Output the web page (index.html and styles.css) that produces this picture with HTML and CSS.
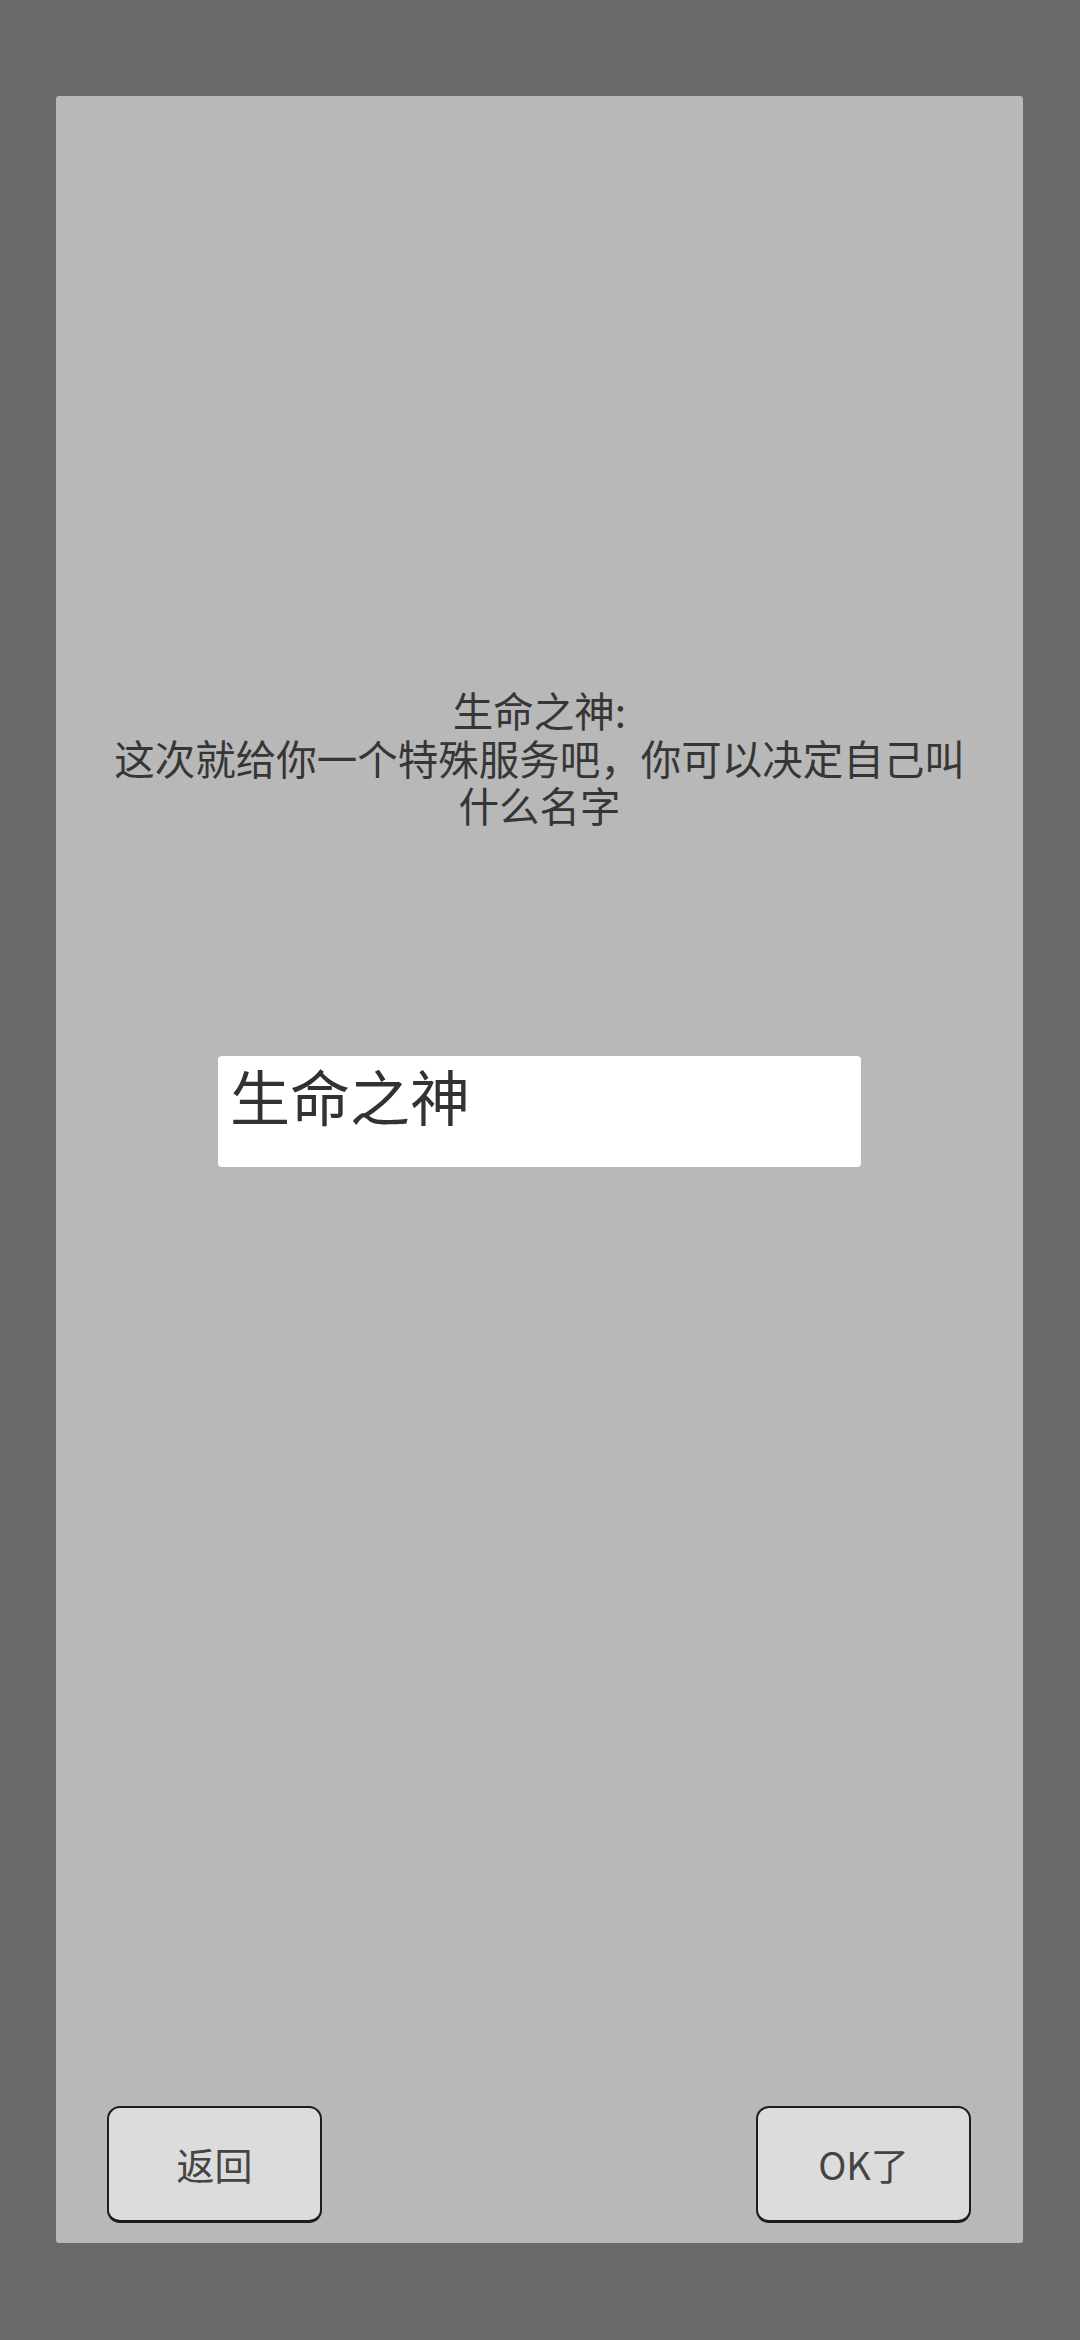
FILE: index.html
```html
<!DOCTYPE html>
<html lang="zh-CN">
<head>
<meta charset="utf-8">
<title>生命之神</title>
<link rel="stylesheet" href="styles.css">
</head>
<body>
<div class="panel">
  <div class="title">生命之神:<br>这次就给你一个特殊服务吧，你可以决定自己叫什么名字</div>
  <div class="input">生命之神</div>
  <div class="actions">
    <button class="btn">返回</button>
    <button class="btn">OK了</button>
  </div>
</div>
</body>
</html>
```
FILE: styles.css
```css
html, body {
  margin: 0;
  padding: 0;
}
body {
  width: 1080px;
  height: 2340px;
  background: #6a6a6a;
  font-family: "Noto Sans CJK SC", "Noto Sans", sans-serif;
  overflow: hidden;
}
.panel {
  box-sizing: border-box;
  margin: 96px 0 0 56px;
  width: 967px;
  height: 2147px;
  background: #b8b8b8;
  border-radius: 3px;
  display: flex;
  flex-direction: column;
  align-items: center;
  padding: 590px 0 20px;
}
.title {
  width: 870px;
  font-size: 40.5px;
  line-height: 47.5px;
  color: #363636;
  text-align: center;
}
.input {
  box-sizing: border-box;
  margin-top: 227px;
  width: 643px;
  height: 111px;
  background: #ffffff;
  border-radius: 4px;
  padding: 3px 12px 0;
  font-size: 60px;
  line-height: 72px;
  color: #323232;
}
.actions {
  margin-top: auto;
  align-self: stretch;
  display: flex;
  justify-content: space-between;
  padding: 0 52px 0 51px;
}
.btn {
  box-sizing: border-box;
  width: 215px;
  height: 117px;
  background: #dcdcdc;
  border: 2px solid #1c1c1c;
  border-bottom-width: 3px;
  border-radius: 13px;
  font-family: "Noto Sans CJK SC", "Noto Sans", sans-serif;
  font-size: 38px;
  color: #444444;
  padding: 0 0 2px;
  display: flex;
  align-items: center;
  justify-content: center;
}
```
